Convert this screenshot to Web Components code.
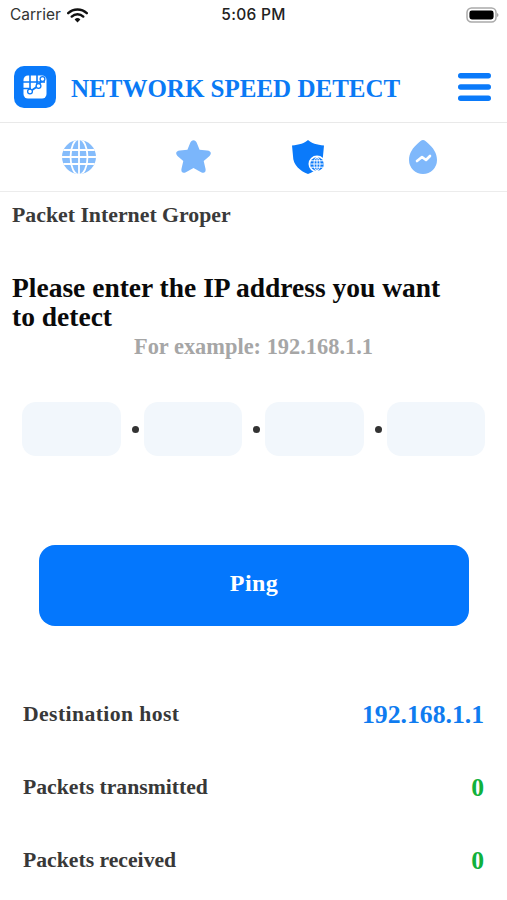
<!DOCTYPE html>
<html><head><meta charset="utf-8"><title>Network Speed Detect</title>
<style>
html,body{margin:0;padding:0;background:#fff;width:507px;height:900px;overflow:hidden}
body{font-family:"Liberation Serif",serif}
</style></head><body>
<app-screen>
<status-bar></status-bar>
<app-header>NETWORK SPEED DETECT</app-header>
<tab-strip></tab-strip>
<ping-form></ping-form>
<result-row label="Destination host" value="192.168.1.1" tone="#0f7cf0" track=".4px"></result-row>
<result-row label="Packets transmitted" value="0" tone="#10b13c"></result-row>
<result-row label="Packets received" value="0" tone="#10b13c"></result-row>
</app-screen>
<script>
const def=(name,html)=>customElements.define(name,class extends HTMLElement{
  connectedCallback(){ if(this.shadowRoot) return; const r=this.attachShadow({mode:'open'}); r.innerHTML=typeof html==='function'?html(this):html; }
});
def('app-screen',`<style>:host{display:flex;flex-direction:column;width:507px;height:900px;overflow:hidden;background:#fff}</style><slot></slot>`);
def('status-bar',`<style>
:host{display:flex;align-items:center;height:30px;padding:0 8px 0 10px;position:relative;font:15px/30px "Inter","Liberation Sans",sans-serif;color:#333;box-sizing:border-box}
.l{display:flex;align-items:center;gap:6px;font-size:15.5px}
.t{position:absolute;left:0;right:0;top:0;text-align:center;font-weight:500;font-size:15.5px;letter-spacing:.3px;color:#222}
.b{margin-left:auto;display:block}
</style>
<div class="l"><span>Carrier</span>
<svg width="21" height="15" viewBox="0 0 21 15"><path d="M1.2 5.2a13.600 13.600 0 0 1 18.600 0" fill="none" stroke="#111" stroke-width="2.400" stroke-linecap="round"/><path d="M4.700 8.600a8.400 8.400 0 0 1 11.600 0" fill="none" stroke="#111" stroke-width="2.400" stroke-linecap="round"/><path d="M7.600 11.500l2.900 3 2.900-3a4.200 4.200 0 0 0-5.800 0z" fill="#111"/></svg></div>
<div class="t">5:06 PM</div>
<svg class="b" width="33" height="16" viewBox="0 0 33 16"><rect x="1" y="1" width="29" height="14" rx="4.500" fill="#fff" stroke="#aaa" stroke-width="1.500"/><rect x="3.400" y="3.500" width="24.200" height="9" rx="2.400" fill="#000"/><path d="M31 6v4a2.200 2.200 0 0 0 1.500-2A2.200 2.200 0 0 0 31 6z" fill="#aaa"/></svg>`);
def('app-header',`<style>
:host{display:flex;align-items:center;height:93px;padding:21px 16px 0 14px;box-sizing:border-box;border-bottom:1px solid #e9e9e9}
.t{margin-left:15px;font:bold 25px/1 "Liberation Serif",serif;color:#0a7af5;white-space:nowrap;flex:1;padding-top:3px}
svg{display:block;flex:none}
</style>
<svg width="42" height="42" viewBox="0 0 42 42"><rect width="42" height="42" rx="10" fill="#0a7afa"/>
<rect x="9.500" y="9.500" width="23" height="23" rx="4.500" fill="#fff"/>
<g fill="none" stroke="#0a7afa"><path stroke-width="1.600" d="M16 9v15M23 9v11M9 16h22M9 22.500h8"/><path stroke-width="1.800" d="M16 25.500l8-5.500 5-7.500"/></g>
<g fill="#fff" stroke="#0a7afa" stroke-width="1.300"><circle cx="16" cy="25.500" r="2.400"/><circle cx="24.500" cy="20" r="2.400"/><circle cx="28.500" cy="13" r="2.400"/></g></svg>
<div class="t"><slot></slot></div>
<svg width="33" height="28" viewBox="0 0 33 28"><g fill="#0a7afa"><rect width="33" height="5.400" rx="2.700" y="0"/><rect width="33" height="5.400" rx="2.700" y="11.300"/><rect width="33" height="5.400" rx="2.700" y="22.600"/></g></svg>`);
def('tab-strip',`<style>
:host{display:grid;grid-template-columns:repeat(4,1fr);height:69px;padding:0 27px 0 22px;box-sizing:border-box;border-bottom:1px solid #ececec;align-items:center;justify-items:center}
svg{display:block}
</style>
<svg width="34" height="34" viewBox="1 1 34 34"><defs><clipPath id="g"><circle cx="18" cy="18" r="17"/></clipPath></defs><circle cx="18" cy="18" r="17" fill="#85bcfb"/><g clip-path="url(#g)" fill="none" stroke="#fff" stroke-width="1.800"><ellipse cx="18" cy="18" rx="8.500" ry="18"/><path d="M18 0v36M0 11h36M0 18h36M0 25h36"/></g></svg>
<svg width="35" height="34" viewBox="2.400 1.500 31.200 30"><path d="M18 1.500c1.400 0 2.200 1 2.900 2.400l2.500 6.200 6.700.6c3.500.4 4.300 2.700 2.200 4.800l-5.200 4.500 1.600 7c.6 3.200-1.300 4.400-3.900 3l-6.800-3.800-6.800 3.800c-2.600 1.400-4.500.2-3.900-3l1.600-7L3.700 15.500C1.600 13.400 2.400 11.100 5.900 10.700l6.700-.6 2.500-6.200C15.800 2.500 16.600 1.500 18 1.500z" fill="#7bb6fb"/></svg>
<svg width="33" height="34" viewBox="0 0 33 34"><path d="M16 0C19 3 25 5 32 5.500L31 16c0 9-7 15-15 18C8 31 1 25 1 16L0 5.500C7 5 13 3 16 0z" fill="#0a7afa"/><circle cx="25" cy="24" r="8.500" fill="#fff"/><circle cx="25" cy="24" r="6.800" fill="#0a7afa"/><g fill="none" stroke="#fff" stroke-width="1"><ellipse cx="25" cy="24" rx="3" ry="6.800"/><path d="M25 17.200v13.600M18.200 24h13.600M19 20.800h12M19 27.200h12"/></g></svg>
<svg width="28" height="34" viewBox="0 0 28 34"><path d="M14 0c1.800 0 3 1.500 5 3.200C24 7.500 28 13 28 20a14 14 0 0 1-28 0C0 13 4 7.500 9 3.200 11 1.500 12.200 0 14 0z" fill="#7fb8fb"/><path d="M8 21l5-4 4 3 4-4" fill="none" stroke="#fff" stroke-width="2.600" stroke-linecap="round" stroke-linejoin="round"/></svg>`);
def('ping-form',`<style>
:host{display:block;box-sizing:border-box;height:486px;padding:0 12px;flex:none}
.sub{font:bold 21.800px/24px "Liberation Serif",serif;color:#3a3a3a;padding-top:11px}
h1{margin:46px 0 0;max-width:445px;font:bold 27.500px/29px "Liberation Serif",serif;color:#0a0a0a}
.ex{font:bold 22.400px/24px "Liberation Serif",serif;color:#a6a6a6;text-align:center;margin-top:4px}
.ips{display:grid;grid-template-columns:99px 1fr 98px 1fr 99px 1fr 98px;margin:43px 10px 0;height:54px;align-items:center;justify-items:center}
.ips i{display:block;width:100%;height:54px;border-radius:14px;background:#f2f7fc}
.ips b{display:block;width:7px;height:7px;border-radius:50%;background:#333;margin-left:5px}
button{display:block;box-sizing:border-box;width:430px;height:81px;margin:89px 0 0 27px;padding:0 0 4px;border:0;border-radius:16px;background:#0477fd;color:#fff;font:bold 24px "Liberation Serif",serif;letter-spacing:.4px}
</style>
<div class="sub">Packet Internet Groper</div>
<h1>Please enter the IP address you want to detect</h1>
<div class="ex">For example: 192.168.1.1</div>
<div class="ips"><i></i><b></b><i></i><b></b><i></i><b></b><i></i></div>
<button>Ping</button>`);
def('result-row',el=>`<style>
:host{display:flex;justify-content:space-between;align-items:center;height:73px;padding:0 23px;box-sizing:border-box;flex:none}
.l{font:bold 21.700px "Liberation Serif",serif;color:#383838;letter-spacing:${el.getAttribute('track')||'0'}}
.v{font:bold 25.700px "Liberation Serif",serif;color:${el.getAttribute('tone')}}
</style><span class="l">${el.getAttribute('label')}</span><span class="v">${el.getAttribute('value')}</span>`);
</script>
</body></html>
